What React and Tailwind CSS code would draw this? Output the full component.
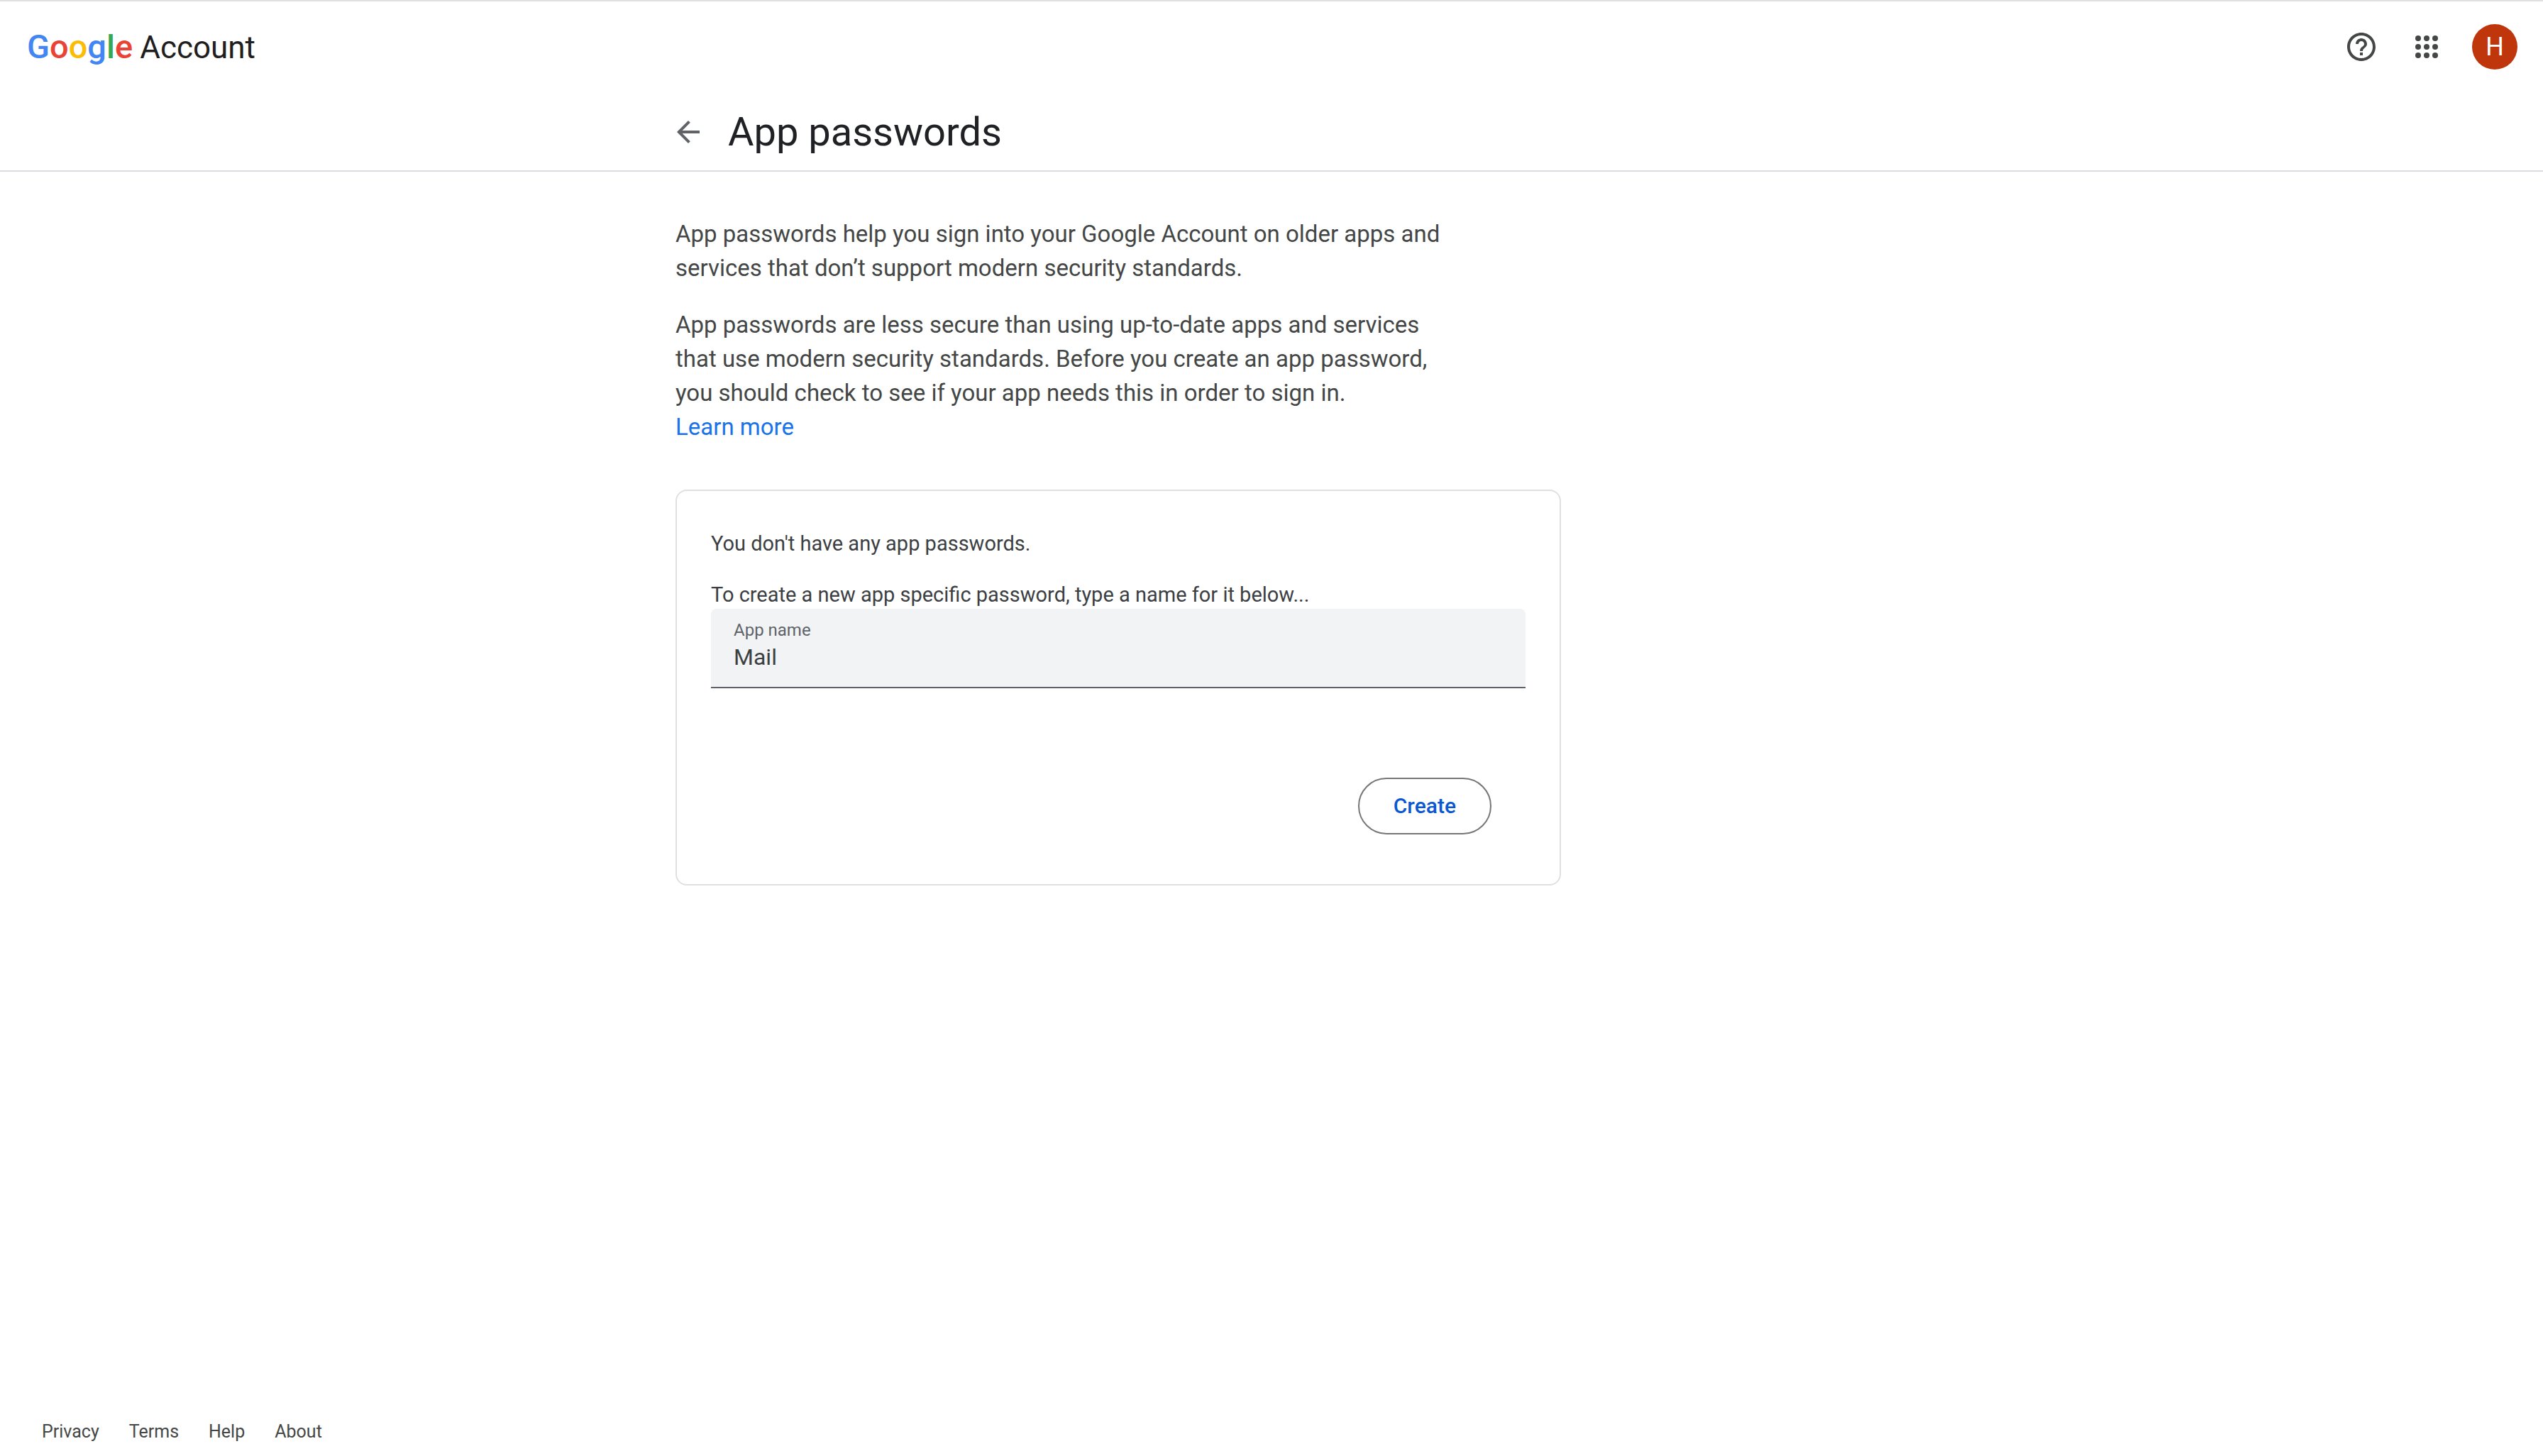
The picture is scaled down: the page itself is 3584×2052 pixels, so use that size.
const LOGO_LETTERS = [
  { char: "G", color: "text-[#4285f4]" },
  { char: "o", color: "text-[#ea4335]" },
  { char: "o", color: "text-[#fbbc05]" },
  { char: "g", color: "text-[#4285f4]" },
  { char: "l", color: "text-[#34a853]" },
  { char: "e", color: "text-[#ea4335]" },
];

const FOOTER_LINKS = ["Privacy", "Terms", "Help", "About"];

function HelpIcon() {
  return (
    <svg viewBox="0 0 24 24" className="size-12 fill-current" aria-hidden="true">
      <path d="M11 18h2v-2h-2v2zm1-16C6.48 2 2 6.48 2 12s4.48 10 10 10 10-4.48 10-10S17.52 2 12 2zm0 18c-4.41 0-8-3.59-8-8s3.59-8 8-8 8 3.59 8 8-3.59 8-8 8zm0-14c-2.21 0-4 1.79-4 4h2c0-1.1.9-2 2-2s2 .9 2 2c0 2-3 1.75-3 5h2c0-2.25 3-2.5 3-5 0-2.21-1.79-4-4-4z" />
    </svg>
  );
}

function AppsIcon() {
  return (
    <svg viewBox="0 0 24 24" className="size-12 fill-current" aria-hidden="true">
      {[6, 12, 18].map((cy) =>
        [6, 12, 18].map((cx) => <circle key={`${cx}-${cy}`} cx={cx} cy={cy} r="2" />)
      )}
    </svg>
  );
}

function BackIcon() {
  return (
    <svg viewBox="0 0 24 24" className="size-12 fill-current" aria-hidden="true">
      <path d="M20 11H7.83l5.59-5.59L12 4l-8 8 8 8 1.41-1.41L7.83 13H20v-2z" />
    </svg>
  );
}

function Header() {
  return (
    <header className="flex h-32 items-center justify-between pl-[38px] pr-9">
      <a href="#home" aria-label="Google Account" className="flex items-baseline gap-2.5">
        <span className="text-[47px] font-medium leading-[64px]">
          {LOGO_LETTERS.map(({ char, color }, i) => (
            <span key={i} className={color}>
              {char}
            </span>
          ))}
        </span>
        <span className="text-[44px] leading-[64px] text-[#1f1f1f]">Account</span>
      </a>
      <div className="flex items-center gap-10">
        <div className="flex items-center gap-11 text-[#444746]">
          <button type="button" aria-label="Help">
            <HelpIcon />
          </button>
          <button type="button" aria-label="Google apps">
            <AppsIcon />
          </button>
        </div>
        <button
          type="button"
          aria-label="Account menu"
          className="flex size-16 items-center justify-center rounded-full bg-[#bf360c] text-[36px] leading-none text-white"
        >
          H
        </button>
      </div>
    </header>
  );
}

export default function App() {
  return (
    <div className="flex min-h-screen flex-col border-t-2 border-[#e0e0e0] bg-white font-['Roboto',sans-serif] text-[#444746]">
      <Header />

      <div className="border-b-2 border-[#dadce0] pb-[18px] pt-5">
        <div className="mx-auto flex w-full max-w-[1680px] items-center gap-8">
          <button type="button" aria-label="Back" className="-ml-1.5 text-[#5f6368]">
            <BackIcon />
          </button>
          <h1 className="text-[56px] leading-[72px] text-[#202124]">App passwords</h1>
        </div>
      </div>

      <main className="mx-auto w-full max-w-[1680px] grow pt-16">
        <div className="max-w-[1104px] space-y-8 text-[33px] leading-[48px]">
          <p>
            App passwords help you sign into your Google Account on older apps and services that
            don’t support modern security standards.
          </p>
          <p>
            App passwords are less secure than using up-to-date apps and services that use modern
            security standards. Before you create an app password, you should check to see if your
            app needs this in order to sign in.
            <a href="#learn-more" className="block w-fit text-[#1a73e8]">
              Learn more
            </a>
          </p>
        </div>

        <form
          onSubmit={(e) => e.preventDefault()}
          className="mt-16 flex w-full max-w-[1248px] flex-col rounded-2xl border-2 border-[#e0e0e0] px-12 pb-[70px] pt-[54px]"
        >
          <p className="text-[29px] leading-10 text-[#3c4043]">You don't have any app passwords.</p>
          <p className="mt-8 text-[29px] leading-10 text-[#3c4043]">
            To create a new app specific password, type a name for it below...
          </p>
          <div className="flex flex-col rounded-t-lg border-b-2 border-[#5f6368] bg-[#f1f3f4] px-8 pb-5 pt-3.5">
            <label htmlFor="app-name" className="text-2xl leading-8 text-[#5f6368]">
              App name
            </label>
            <input
              id="app-name"
              type="text"
              defaultValue="Mail"
              className="h-11 w-full bg-transparent text-[32px] leading-10 text-[#3c4043] outline-none"
            />
          </div>
          <button
            type="submit"
            className="mr-12 mt-[126px] h-20 self-end rounded-full border-2 border-[#747775] px-12 text-[30px] font-medium leading-10 text-[#0b57d0]"
          >
            Create
          </button>
        </form>
      </main>

      <footer className="flex gap-[42px] pb-[18px] pl-[59px] text-[25px] leading-8">
        {FOOTER_LINKS.map((label) => (
          <a key={label} href={`#${label.toLowerCase()}`}>
            {label}
          </a>
        ))}
      </footer>
    </div>
  );
}
